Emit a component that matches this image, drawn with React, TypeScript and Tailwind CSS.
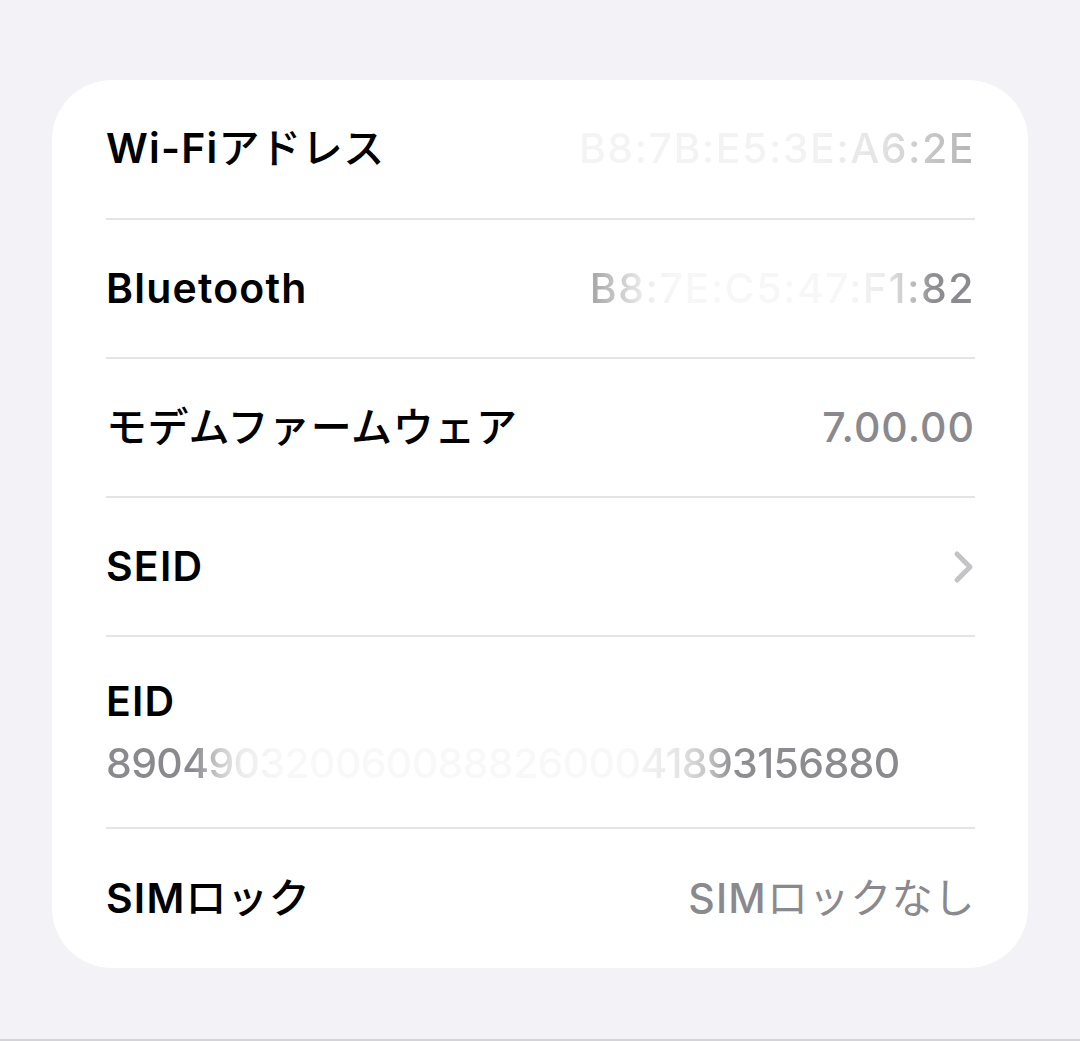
import { ReactNode } from 'react'

const font = { fontFamily: 'Inter, "Noto Sans CJK JP", sans-serif' }

// Latin runs read heavier than the kana in the reference, so split the label.
function Label({ text }: { text: string }) {
  const parts = text.split(/([\u3040-\u30ff]+)/).filter(Boolean)
  return (
    <span className="text-[41px] text-black">
      {parts.map((p, i) =>
        /[\u3040-\u30ff]/.test(p) ? (
          <span key={i} className="font-medium tracking-[0.6px]">{p}</span>
        ) : (
          <span key={i} className="font-semibold tracking-[1.2px]">{p}</span>
        )
      )}
    </span>
  )
}

function Row({ label, h = 'h-[137px]', children }: { label: string; h?: string; children?: ReactNode }) {
  return (
    <div className={`flex items-center justify-between ${h}`}>
      <Label text={label} />
      {children}
    </div>
  )
}

function Divider() {
  return <div className="h-[2px] bg-[#e4e4e7]" />
}

export default function App() {
  return (
    <div className="flex h-[1041px] flex-col bg-[#f2f2f7]" style={font}>
      <div className="mx-[52px] mt-[80px] rounded-[60px] bg-white pr-[53px] pl-[54px]">
        <Row label="Wi-Fiアドレス" h="h-[138px]">
          <span className="bg-[linear-gradient(to_right,#f4f4f4_0%,#f2f2f2_60%,#e4e4e4_76%,#cbcbcb_86%,#b4b4b4_100%)] bg-clip-text text-[41px] font-medium tracking-[1.5px] text-transparent">
            B8:7B:E5:3E:A6:2E
          </span>
        </Row>
        <Divider />
        <Row label="Bluetooth">
          <span className="bg-[linear-gradient(to_right,#a4a4a6_0%,#c8c8c8_7%,#ececec_14%,#f7f7f7_22%,#f7f7f7_66%,#ececec_76%,#c4c4c4_83%,#8e8e92_89%,#8a8a8e_100%)] bg-clip-text text-[41px] font-medium tracking-[1.5px] text-transparent">
            B8:7E:C5:47:F1:82
          </span>
        </Row>
        <Divider />
        <Row label="モデムファームウェア">
          <span className="text-[41px] font-medium tracking-[1px] text-[#8a8a8e]">7.00.00</span>
        </Row>
        <Divider />
        <Row label="SEID">
          <svg width="22" height="34" viewBox="0 0 22 34">
            <polyline
              points="4,4 17,17 4,30"
              fill="none"
              stroke="#c4c4c7"
              strokeWidth="5"
              strokeLinecap="round"
              strokeLinejoin="round"
            />
          </svg>
        </Row>
        <Divider />
        <div className="flex flex-col gap-[14px] pt-[40px] pb-[40px]">
          <span className="text-[41px] leading-[48px] font-semibold tracking-[1.2px] text-black">EID</span>
          <span className="self-start bg-[linear-gradient(to_right,#8a8a8e_0%,#8a8a8e_11%,#c6c6c6_14%,#ececec_17%,#f8f8f8_22%,#f8f8f8_66%,#e6e6e6_72%,#c2c2c2_76%,#8e8e92_79%,#8a8a8e_100%)] bg-clip-text text-[41px] leading-[48px] font-medium tracking-[-0.65px] text-transparent">
            89049032006008882600041893156880
          </span>
        </div>
        <Divider />
        <Row label="SIMロック" h="h-[139px]">
          <span className="text-[41px] text-[#8a8a8e]">
            <span className="font-medium tracking-[1.2px]">SIM</span>
            <span className="font-normal tracking-[0.6px]">ロックなし</span>
          </span>
        </Row>
      </div>
      <div className="mt-auto h-[2px] bg-[#d4d4d8]" />
    </div>
  )
}
